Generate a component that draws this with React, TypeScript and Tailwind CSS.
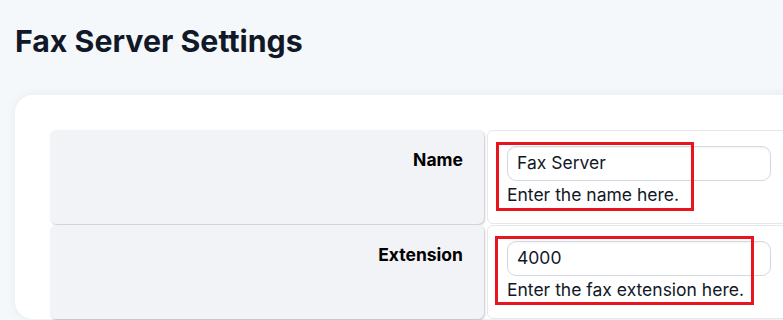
export default function App() {
  return (
    <main className="h-[320px] overflow-hidden bg-[#f4f8fb] font-['Inter','Noto_Sans',sans-serif]">
      <h1 className="pt-[23px] pl-[15px] text-[30.3px] leading-[36px] font-bold text-[#111827]">
        Fax Server Settings
      </h1>

      {/* Settings card */}
      <div className="mt-[36px] ml-[15px] w-[820px] rounded-[18px] bg-white pt-[35px] pl-[35px] shadow-[0_0_12px_rgba(0,0,0,0.06)]">
        <div className="grid grid-cols-[434px_1fr] gap-x-[3px] gap-y-px">
          {/* Name */}
          <div className="h-[94px] rounded-md bg-[#f2f3f6] pr-[21px] pt-[18px] text-right text-[17.5px] leading-6 font-bold text-black shadow-[1px_1px_2px_rgba(0,0,0,0.22)]">
            Name
          </div>
          <div className="relative h-[94px] rounded-md border border-[#e5e7eb] bg-white pl-[19px] pt-[15px]">
            <div className="flex h-[35px] w-[264px] items-center rounded-[9px] border border-[#d4d8e1] px-[9px] text-[17.5px] text-[#111827] shadow-[inset_0_1px_2px_rgba(0,0,0,0.05)]">
              Fax Server
            </div>
            <p className="mt-[2px] text-[17.5px] leading-6 text-[#111827]">Enter the name here.</p>
            <div className="absolute left-[8px] top-[11px] h-[69px] w-[198px] border-[3px] border-[#e8141e]" />
          </div>

          {/* Extension */}
          <div className="h-[94px] rounded-md bg-[#f2f3f6] pr-[21px] pt-[18px] text-right text-[17.5px] leading-6 font-bold text-black shadow-[1px_1px_2px_rgba(0,0,0,0.22)]">
            Extension
          </div>
          <div className="relative h-[94px] rounded-md border border-[#e5e7eb] bg-white pl-[19px] pt-[15px]">
            <div className="flex h-[35px] w-[264px] items-center rounded-[9px] border border-[#d4d8e1] px-[9px] text-[17.5px] text-[#111827] shadow-[inset_0_1px_2px_rgba(0,0,0,0.05)]">
              4000
            </div>
            <p className="mt-[2px] text-[17.5px] leading-6 text-[#111827]">Enter the fax extension here.</p>
            <div className="absolute left-[7px] top-[10px] h-[69px] w-[259px] border-[3px] border-[#e8141e]" />
          </div>
        </div>
      </div>
    </main>
  );
}
